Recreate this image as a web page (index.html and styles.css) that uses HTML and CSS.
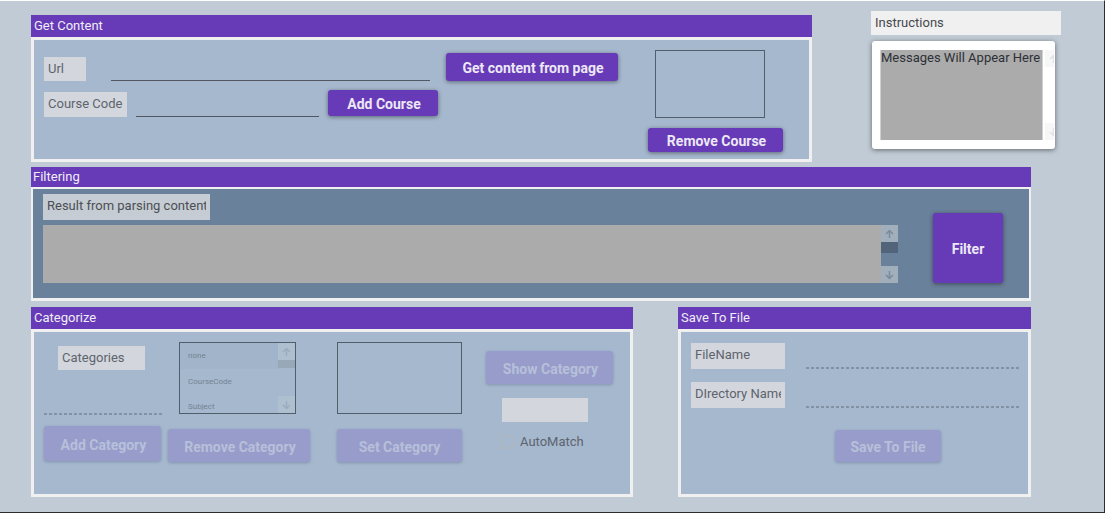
FILE: index.html
```html
<!DOCTYPE html>
<html lang="en">
<head>
<meta charset="utf-8">
<title>Course Content</title>
<link rel="stylesheet" href="styles.css">
</head>
<body>
<svg width="0" height="0" class="defs" aria-hidden="true">
  <symbol id="up" viewBox="0 0 17 17"><path d="M8.500 13V5.500M5 9l3.500-3.500 3.500 3.500" fill="none" stroke="currentColor" stroke-width="1.500"/></symbol>
  <symbol id="down" viewBox="0 0 17 17"><path d="M8.500 5v7.500M5 9l3.500 3.500 3.500-3.500" fill="none" stroke="currentColor" stroke-width="1.500"/></symbol>
</svg>
<main class="page">
  <div class="top">
    <section class="panel get">
      <h2 class="title">Get Content</h2>
      <div class="box get-body">
        <div class="fields">
          <div class="row">
            <label class="tag url-tag" for="url">Url</label>
            <input class="line grow" id="url" type="text">
            <button class="btn get-btn" type="button">Get content from page</button>
          </div>
          <div class="row">
            <label class="tag code-tag" for="code">Course Code</label>
            <input class="line code-line" id="code" type="text">
            <button class="btn add-course" type="button">Add Course</button>
          </div>
        </div>
        <div class="courses">
          <ul class="list course-list" aria-label="Courses"></ul>
          <button class="btn remove-course" type="button">Remove Course</button>
        </div>
      </div>
    </section>
    <aside class="instructions">
      <label class="tag heading-tag" for="messages">Instructions</label>
      <div class="card">
        <textarea class="area messages" id="messages" readonly>Messages Will Appear Here</textarea>
        <div class="bar pale" aria-hidden="true">
          <svg class="arrow"><use href="#up"/></svg>
          <svg class="arrow last"><use href="#down"/></svg>
        </div>
      </div>
    </aside>
  </div>

  <section class="panel filtering">
    <h2 class="title slim">Filtering</h2>
    <div class="box filter-body">
      <div class="results">
        <label class="tag result-tag" for="result">Result from parsing content</label>
        <div class="scroller">
          <textarea class="area result" id="result" readonly></textarea>
          <div class="bar" aria-hidden="true">
            <svg class="arrow"><use href="#up"/></svg>
            <div class="thumb"></div>
            <svg class="arrow last"><use href="#down"/></svg>
          </div>
        </div>
      </div>
      <button class="btn filter-btn" type="button">Filter</button>
    </div>
  </section>

  <div class="bottom">
    <section class="panel">
      <h2 class="title">Categorize</h2>
      <div class="box cat-body">
        <div class="col c1">
          <label class="tag cat-tag" for="category">Categories</label>
          <input class="line dashed" id="category" type="text" disabled>
          <button class="btn tall" type="button" disabled>Add Category</button>
        </div>
        <div class="col c2">
          <div class="list options">
            <ul class="items">
              <li class="item chosen">none</li>
              <li class="item">CourseCode</li>
              <li class="item">Subject</li>
            </ul>
            <div class="bar faint" aria-hidden="true">
              <svg class="arrow"><use href="#up"/></svg>
              <div class="thumb"></div>
              <svg class="arrow last"><use href="#down"/></svg>
            </div>
          </div>
          <button class="btn" type="button" disabled>Remove Category</button>
        </div>
        <div class="col c3">
          <ul class="list" aria-label="Values"></ul>
          <button class="btn" type="button" disabled>Set Category</button>
        </div>
        <div class="col c4">
          <button class="btn" type="button" disabled>Show Category</button>
          <input class="match-value" type="text" aria-label="Match value" disabled>
          <label class="check"><input class="tick" type="checkbox" disabled>AutoMatch</label>
        </div>
      </div>
    </section>
    <section class="panel">
      <h2 class="title">Save To File</h2>
      <div class="box save-body">
        <label class="tag save-tag" for="file">FileName</label>
        <input class="line dashed" id="file" type="text" disabled>
        <label class="tag save-tag" for="dir">DIrectory Name</label>
        <input class="line dashed" id="dir" type="text" disabled>
        <button class="btn save-btn" type="button" disabled>Save To File</button>
      </div>
    </section>
  </div>
</main>
</body>
</html>
```
FILE: styles.css
```css
* { box-sizing: border-box; }

body {
  margin: 0;
  font: 13px/16px Roboto, "Liberation Sans", sans-serif;
  color: #5d646e;
}

.defs { position: absolute; }

.page {
  min-height: 100vh;
  padding: 10px 0 15px 31px;
  background: #c1cbd5;
  border: solid #2b2d31;
  border-width: 1px 1px 1px 0;
  border-top-color: #fff;
}

.top {
  display: grid;
  grid-template-columns: 781fr 190fr;
  column-gap: 59px;
  align-items: start;
  margin-right: 43px;
}

.get { margin-top: 4px; }

.filtering { margin: 5px 73px 6px 0; }

.bottom {
  display: grid;
  grid-template-columns: 602fr 353fr;
  column-gap: 45px;
  margin-right: 73px;
}

.title {
  margin: 0;
  padding: 3px;
  font-size: 13px;
  font-weight: 400;
  line-height: 16px;
  color: #f0eef5;
  background: #673ab7;
}

.slim { padding: 2px; }

.box {
  background: #a6b8ce;
  border: 3px solid #f0f0f0;
}

.tag {
  display: block;
  height: 24px;
  border: 0 solid #d3d6dc;
  border-width: 0 4px;
  background: #d3d6dc;
  line-height: 24px;
  white-space: nowrap;
  overflow: hidden;
}

.line {
  min-width: 0;
  height: 24px;
  padding: 0 2px;
  border: 0;
  border-bottom: 1px solid #515863;
  background: none;
  font: inherit;
}

.dashed {
  border: 0;
  background: repeating-linear-gradient(to right, #8292a4 0 3px, transparent 3px 5px) bottom / 100% 2px no-repeat;
}

.btn {
  height: 33px;
  padding: 2px 0 0 2px;
  border: 0;
  border-radius: 3px;
  background: #673ab7;
  box-shadow: 0 1px 4px rgba(0, 0, 0, 0.45);
  color: #ece8f5;
  font: 700 14px/20px Roboto, "Liberation Sans", sans-serif;
  white-space: nowrap;
}

.btn:disabled {
  background: #989cca;
  box-shadow: 0 1px 3px rgba(60, 80, 110, 0.35);
  color: #b6c0da;
}

.list {
  margin: 0;
  padding: 0;
  height: 72px;
  border: 1px solid #515d6a;
  list-style: none;
}

.area {
  display: block;
  flex: 1;
  min-width: 0;
  padding: 0;
  border: 0;
  resize: none;
  overflow: hidden;
  background: #ababab;
  color: #2d3036;
  font: inherit;
}

.bar {
  display: flex;
  flex-direction: column;
  width: 17px;
  color: #7d8997;
}

.arrow {
  display: block;
  flex: none;
  width: 17px;
  height: 17px;
  background: #a1aebc;
}

.last { margin-top: auto; }

.thumb {
  height: 11px;
  background: #516479;
}

/* Get Content */
.get-body {
  display: flex;
  gap: 30px;
  padding: 10px 26px 7px 10px;
}

.fields {
  flex: 1;
  min-width: 0;
  display: flex;
  flex-direction: column;
  gap: 9px;
  padding-top: 3px;
}

.row {
  display: flex;
  align-items: flex-end;
}

.grow {
  flex: 1;
  margin: 0 16px 0 25px;
}

.url-tag { width: 42px; }
.get-btn { width: 172px; height: 28px; }
.code-tag { width: 83px; height: 25px; }
.code-line { width: 183px; margin: 0 9px; }
.add-course { width: 110px; height: 26px; margin-bottom: 1px; }

.courses { width: 135px; }
.course-list { width: 110px; height: 68px; margin: 0 0 10px 7px; }
.remove-course { display: block; width: 100%; height: 24px; }

/* Instructions */
.heading-tag {
  border-color: #f0f0f0;
  background: #f0f0f0;
  color: #45484d;
}

.card {
  display: flex;
  gap: 2px;
  margin: 6px 6px 0 1px;
  padding: 9px 1px 9px 8px;
  border-radius: 3px;
  background: #fff;
  box-shadow: 0 1px 5px rgba(0, 0, 0, 0.5);
}

.messages {
  height: 90px;
  border: solid #d0d0d0;
  border-width: 0 1px;
}

.pale {
  width: 9px;
  overflow: hidden;
  color: #e2e2e2;
}

.pale .arrow { background: #f7f7f7; }

/* Filtering */
.filter-body {
  display: flex;
  gap: 35px;
  align-items: flex-end;
  padding: 5px 26px 15px 10px;
  border-width: 2px 2px 3px;
  background: #6a819b;
}

.results { flex: 1; min-width: 0; }

.result-tag {
  width: 167px;
  height: 26px;
  margin-bottom: 5px;
  border-color: #c6ccd3;
  background: #c6ccd3;
  color: #4b4f55;
}

.scroller { display: flex; }
.result { height: 58px; }
.filter-btn { width: 70px; height: 70px; padding-left: 0; }

/* Categorize */
.cat-body {
  display: flex;
  padding: 10px 17px 32px 10px;
}

.col {
  display: flex;
  flex-direction: column;
  min-width: 0;
}

.c1 { flex: 119 1 0; padding-top: 4px; }
.c2 { flex: 142 1 0; margin-left: 5px; }
.c3 { flex: 125 1 0; margin-left: 27px; }
.c4 { flex: 127 1 0; margin-left: 24px; padding-top: 9px; }

.col .list { margin-bottom: 15px; }
.cat-tag { width: 87px; margin: 0 0 21px 14px; }
.c1 .tall { height: 35px; margin: 11px 2px 0 0; }
.c3 .btn { padding-left: 0; }

.c2 .options {
  display: flex;
  margin-left: 11px;
  margin-right: 14px;
  overflow: hidden;
}

.items {
  flex: 1;
  min-width: 0;
  margin: 0;
  padding: 0;
  list-style: none;
}

.item {
  height: 25px;
  padding-left: 8px;
  font-size: 8px;
  line-height: 26px;
  color: #748292;
}

.chosen { height: 26px; background: #a2b4c9; }
.faint { color: #9bacbe; }
.faint .arrow { background: #aebfd0; }
.faint .thumb { height: 8px; background: #98a8b9; }

.match-value {
  width: 86px;
  height: 24px;
  margin: 14px 0 12px 16px;
  padding: 0 4px;
  border: 0;
  background: #d3d6dc;
}

.check {
  display: flex;
  align-items: center;
  gap: 6px;
  margin-left: 14px;
}

.tick {
  appearance: none;
  width: 14px;
  height: 14px;
  margin: 0;
  border: 2px solid #adb7c3;
  border-radius: 2px;
}

/* Save To File */
.save-body {
  display: grid;
  grid-template-columns: 94px 1fr;
  gap: 13px 21px;
  align-content: start;
  align-items: end;
  padding: 11px 9px 32px 10px;
}

.save-tag { height: 26px; }

.save-btn {
  grid-column: 1 / -1;
  justify-self: start;
  width: 106px;
  height: 32px;
  margin: 9px 0 0 144px;
  padding-left: 0;
}
```
